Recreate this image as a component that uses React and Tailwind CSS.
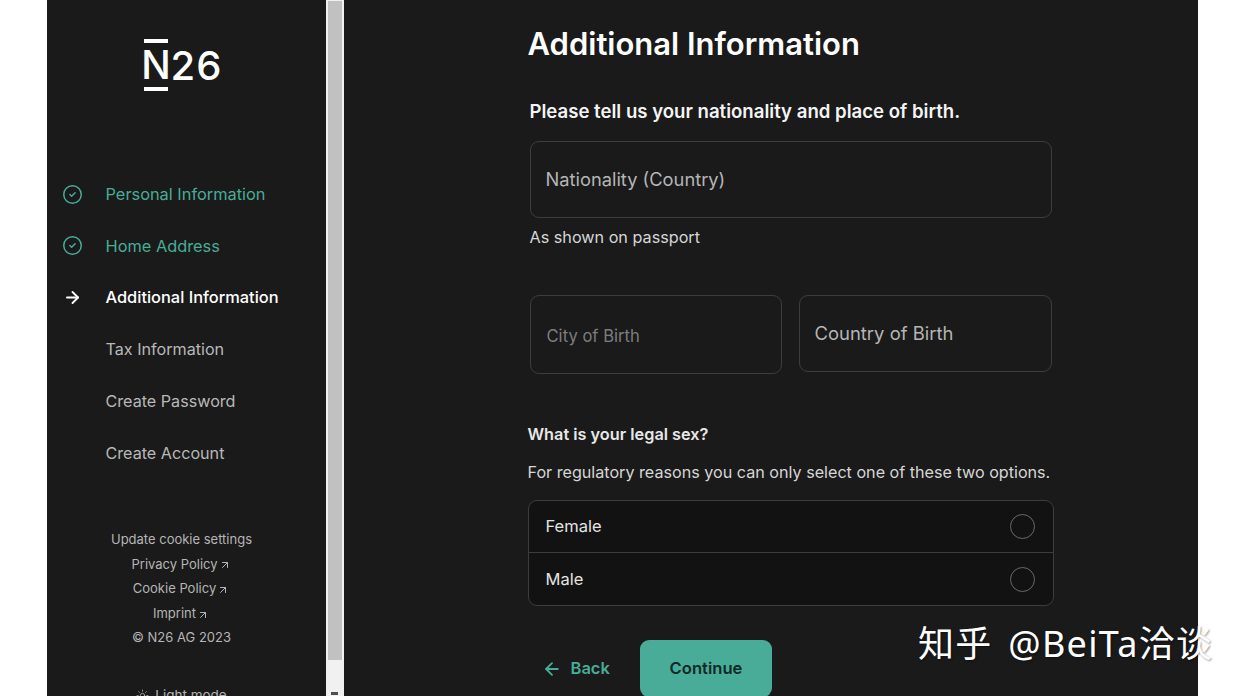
import React from 'react';
import { ArrowLeft, ArrowRight, ArrowUpRight, CircleCheck, Sun } from 'lucide-react';

const steps = [
  { label: 'Personal Information', state: 'done' },
  { label: 'Home Address', state: 'done' },
  { label: 'Additional Information', state: 'active' },
  { label: 'Tax Information', state: 'todo' },
  { label: 'Create Password', state: 'todo' },
  { label: 'Create Account', state: 'todo' },
];

const FooterLink = ({ label }) => (
  <div className="flex h-[24.6px] items-center justify-center gap-[1px] pr-[1px]">
    <span>{label}</span>
    <ArrowUpRight className="mt-[2px] h-[12px] w-[12px] text-[#b5b5b5]" strokeWidth={2} />
  </div>
);

const Sidebar = () => (
  <aside className="flex h-[696px] w-[279px] shrink-0 flex-col overflow-hidden bg-[#1a1a1a]">
    {/* Logo */}
    <div className="ml-[97px] mt-[39px] flex h-[52px] items-center">
      <div className="flex h-[52px] w-[25px] flex-col items-center justify-between">
        <div className="h-[4px] w-[24px] bg-white" />
        <span className="text-[39px] font-medium leading-[38px] text-white">N</span>
        <div className="h-[4px] w-[24px] bg-white" />
      </div>
      <span className="ml-[2px] mt-[2px] text-[40px] font-medium leading-[38px] tracking-[1px] text-white">26</span>
    </div>

    {/* Steps */}
    <nav className="mt-[77.2px] flex flex-col">
      {steps.map((step) => (
        <div key={step.label} className="flex h-[51.8px] items-center">
          <div className="flex w-[59px] shrink-0">
            <div className="flex w-[52px] justify-center">
              {step.state === 'done' && <CircleCheck className="h-[21px] w-[21px] text-[#48ac98]" strokeWidth={1.7} />}
              {step.state === 'active' && <ArrowRight className="h-[19px] w-[19px] text-white" strokeWidth={2.4} />}
            </div>
          </div>
          <span
            className={
              step.state === 'done'
                ? 'text-[16.35px] text-[#48ac98]'
                : step.state === 'active'
                  ? 'text-[16.4px] font-medium text-white'
                  : 'text-[16.15px] text-[#b8b8b8]'
            }
          >
            {step.label}
          </span>
        </div>
      ))}
    </nav>

    {/* Footer */}
    <div className="mt-[48.6px] flex w-[270px] flex-col text-center text-[13px] text-[#b5b5b5]">
      <div className="flex h-[24.6px] items-center justify-center">Update cookie settings</div>
      <FooterLink label="Privacy Policy" />
      <FooterLink label="Cookie Policy" />
      <FooterLink label="Imprint" />
      <div className="flex h-[24.6px] items-center justify-center">© N26 AG 2023</div>
      <div className="mt-[35px] flex h-[20px] items-center justify-center gap-[6px] text-[13.5px]">
        <Sun className="h-[13px] w-[13px]" strokeWidth={1.5} />
        <span>Light mode</span>
      </div>
    </div>
  </aside>
);

const Scrollbar = () => (
  <div className="flex h-[696px] w-[18px] shrink-0 flex-col bg-[#f1f1f1] px-[2px] pt-[1px]">
    <div className="h-[659px] w-full bg-[#c1c1c1]" />
    <div className="mt-auto flex justify-center pb-[1px]">
      <div className="h-[3px] w-[7px] bg-[#505050]" />
    </div>
  </div>
);

const Field = ({ label, className }) => (
  <div className={`flex items-center rounded-[9px] border border-[#3d3d3d] ${className}`}>{label}</div>
);

const RadioRow = ({ label, className }) => (
  <div className={`flex h-[52px] items-center justify-between pl-[17px] pr-[18px] text-[16.5px] text-[#e4e4e4] ${className}`}>
    <span>{label}</span>
    <div className="h-[25px] w-[25px] rounded-full border border-[#6a6a6a]" />
  </div>
);

const Form = () => (
  <main className="h-[696px] w-[854px] shrink-0 overflow-hidden bg-[#1a1a1a] pl-[184px]">
    <h1 className="mt-[24px] text-[31px] font-semibold leading-[40px] text-white">Additional Information</h1>

    <p className="ml-[2px] mt-[33px] text-[18.6px] font-semibold leading-[28px] text-[#f4f4f4]">
      Please tell us your nationality and place of birth.
    </p>

    <Field label="Nationality (Country)" className="ml-[2px] mt-[16px] h-[77px] w-[522px] pl-[15px] text-[18.3px] text-[#b5b5b5]" />
    <p className="ml-[2px] mt-[7px] text-[16.2px] leading-[24px] text-[#d6d6d6]">As shown on passport</p>

    <div className="ml-[2px] mt-[46px] flex items-start gap-[17px]">
      <Field label="City of Birth" className="h-[79px] w-[252px] pl-[16px] pt-[3px] text-[16.6px] text-[#7d7d7d]" />
      <Field label="Country of Birth" className="h-[77px] w-[253px] pl-[15px] text-[18.45px] text-[#b5b5b5]" />
    </div>

    <p className="mt-[48px] text-[16.3px] font-semibold leading-[24px] text-[#e8e8e8]">What is your legal sex?</p>
    <p className="mt-[14px] text-[16.15px] leading-[24px] text-[#d6d6d6]">
      For regulatory reasons you can only select one of these two options.
    </p>

    <div className="mt-[16px] w-[526px] overflow-hidden rounded-[9px] border border-[#3d3d3d] bg-[#121212]">
      <RadioRow label="Female" className="border-b border-[#3d3d3d]" />
      <RadioRow label="Male" />
    </div>

    <div className="mt-[34px] flex items-center">
      <div className="ml-[14px] flex w-[98px] items-center gap-[9px] text-[16.5px] font-semibold text-[#48ac98]">
        <ArrowLeft className="h-[20px] w-[20px]" strokeWidth={2.2} />
        <span>Back</span>
      </div>
      <div className="flex h-[57px] w-[132px] items-center justify-center rounded-[9px] bg-[#48ac98] pl-[1px] text-[16.6px] font-semibold text-[#0f2a26]">
        Continue
      </div>
    </div>
  </main>
);

export default function App() {
  return (
    <div className="relative flex h-[696px] w-[1245px] justify-center overflow-hidden bg-white font-['Inter','Noto_Sans_CJK_SC',sans-serif]">
      <div className="ml-[-1px] flex">
        <Sidebar />
        <Scrollbar />
        <Form />
      </div>
      {/* Watermark */}
      <div className="absolute left-[918px] top-[622px] whitespace-nowrap font-['Noto_Sans','Noto_Sans_CJK_SC',sans-serif] text-[36px] leading-[44px] tracking-[1.3px] text-white [word-spacing:5px] [text-shadow:1px_1px_2px_rgba(0,0,0,0.4)]">
        知乎 @BeiTa洽谈
      </div>
    </div>
  );
}
